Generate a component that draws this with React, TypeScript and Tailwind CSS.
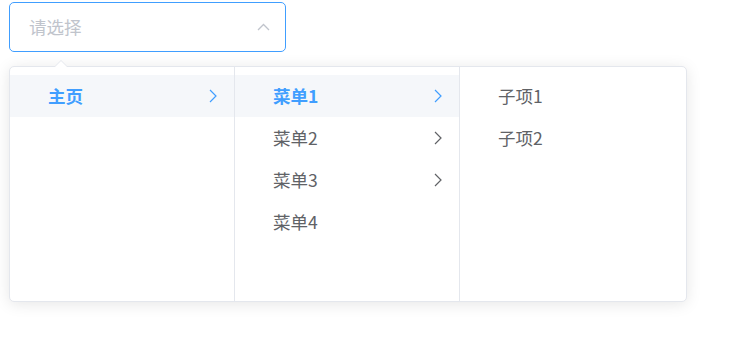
import React from "react";

const font = { fontFamily: '"Noto Sans CJK SC", "Noto Sans", sans-serif' };

function Right({ active }: { active?: boolean }) {
  return (
    <svg width="8" height="14" viewBox="0 0 8 14" className="shrink-0">
      <polyline
        points="1,1 7,7 1,13"
        fill="none"
        stroke={active ? "#409eff" : "#606266"}
        strokeWidth="1.2"
      />
    </svg>
  );
}

type Item = { label: string; active?: boolean; arrow?: boolean };

function Column({ items, last }: { items: Item[]; last?: boolean }) {
  return (
    <div
      className={
        (last ? "flex-1 " : "w-[225px] border-r border-[#e4e7ed] ") + "py-[8px] flex flex-col"
      }
    >
      {items.map((it) => (
        <div
          key={it.label}
          className={
            "h-[42px] flex items-center pl-[38px] pr-[17px] text-[17.5px] " +
            (it.active ? "bg-[#f5f7fa] text-[#409eff] font-bold" : "text-[#606266]")
          }
        >
          <span className="flex-1">{it.label}</span>
          {it.arrow && <Right active={it.active} />}
        </div>
      ))}
    </div>
  );
}

export default function App() {
  return (
    <div className="w-[737px] h-[354px] bg-white pl-[9px] pt-[2px]" style={font}>
      <div className="w-[277px] h-[50px] border border-[#409eff] rounded-[5px] flex items-center pl-[19px] pr-[15px]">
        <span className="flex-1 text-[17.5px] text-[#c0c4cc]">请选择</span>
        <svg width="13" height="8" viewBox="0 0 13 8">
          <polyline points="1,7 6.5,1.5 12,7" fill="none" stroke="#c0c4cc" strokeWidth="1.3" />
        </svg>
      </div>
      <div className="relative mt-[14px] w-[678px] h-[236px] border border-[#e4e7ed] rounded-[5px] bg-white shadow-[0_2px_15px_0_rgba(0,0,0,0.1)] flex">
        <div className="absolute left-[44px] -top-[7px] w-0 h-0 border-l-[7px] border-r-[7px] border-b-[7px] border-l-transparent border-r-transparent border-b-[#e4e7ed]">
          <div className="absolute -left-[6px] top-[1px] w-0 h-0 border-l-[6px] border-r-[6px] border-b-[6px] border-l-transparent border-r-transparent border-b-white" />
        </div>
        <Column items={[{ label: "主页", active: true, arrow: true }]} />
        <Column
          items={[
            { label: "菜单1", active: true, arrow: true },
            { label: "菜单2", arrow: true },
            { label: "菜单3", arrow: true },
            { label: "菜单4" },
          ]}
        />
        <Column items={[{ label: "子项1" }, { label: "子项2" }]} last />
      </div>
    </div>
  );
}
